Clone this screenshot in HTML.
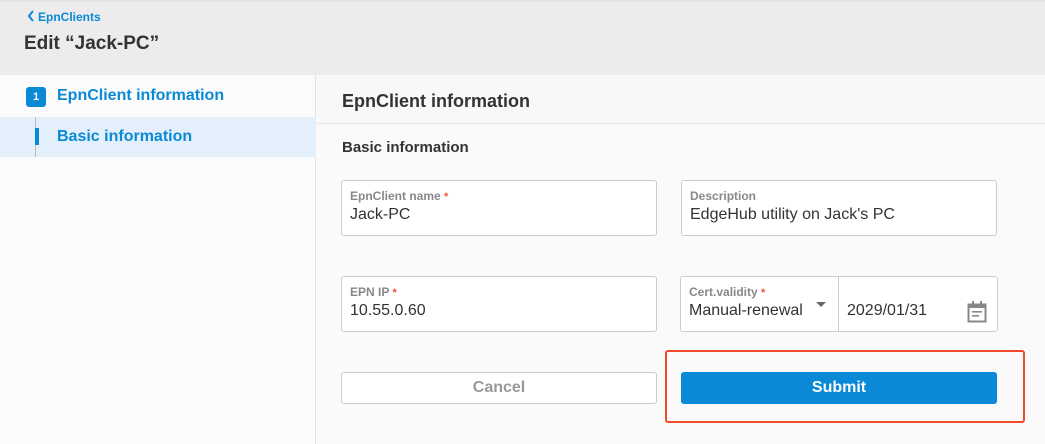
<!DOCTYPE html>
<html><head><style>
*{box-sizing:border-box;margin:0;padding:0}
body{width:1045px;height:444px;overflow:hidden;font-family:"Liberation Sans",sans-serif;background:#fafafa;position:relative}
.top{position:absolute;left:0;top:0;width:1045px;height:75px;background:#ececec;border-top:2px solid #e2e2e2}
.back{position:absolute;left:27px;top:10px;color:#0a8ad6;font-size:12px;font-weight:bold}
.title{position:absolute;left:24px;top:33px;font-size:19px;font-weight:bold;color:#333}
.side{position:absolute;left:0;top:75px;width:316px;height:369px;background:#fbfbfb;border-right:1px solid #e4e4e4}
.num{position:absolute;left:26px;top:87px;width:20px;height:20px;background:#0a8ad6;border-radius:3px;color:#fff;font-size:11px;font-weight:bold;text-align:center;line-height:20px}
.s1{position:absolute;left:57px;top:87px;color:#0a8ad6;font-size:16px;font-weight:bold}
.sel{position:absolute;left:0;top:117px;width:316px;height:40px;background:#e3f0fb}
.vl{position:absolute;left:35px;top:117px;width:1px;height:40px;background:#bbb}
.vb{position:absolute;left:35px;top:128px;width:4px;height:17px;background:#0a8ad6}
.s2{position:absolute;left:57px;top:128px;color:#0a8ad6;font-size:16px;font-weight:bold}
.ph{position:absolute;left:317px;top:75px;width:728px;height:49px;border-bottom:1px solid #e2e2e2;background:#f8f8f8}
.ph span{position:absolute;left:25px;top:16px;font-size:18px;font-weight:bold;color:#333}
.sub{position:absolute;left:342px;top:139px;font-size:15px;font-weight:bold;color:#333}
.in{position:absolute;background:#fff;border:1px solid #ccc;border-radius:3px;height:56px}
.in .l{position:absolute;left:8px;top:8px;font-size:12px;font-weight:bold;color:#888}
.in .l b{color:#e8553a;font-size:11px}
.in .v{position:absolute;left:8px;top:25px;font-size:16px;color:#333}
.btn{position:absolute;height:32px;border-radius:3px;font-size:16px;font-weight:bold;text-align:center;line-height:30px}
</style></head><body>
<div class="top"></div>
<div class="back"><svg width="8" height="12" style="vertical-align:-1px;margin-right:3px"><path d="M6 1L2 6l4 5" stroke="#0a8ad6" stroke-width="2" fill="none"/></svg>EpnClients</div>
<div class="title">Edit “Jack-PC”</div>
<div class="side"></div>
<div class="num">1</div><div class="s1">EpnClient information</div>
<div class="sel"></div><div class="vl"></div><div class="vb"></div><div class="s2">Basic information</div>
<div class="ph"><span>EpnClient information</span></div>
<div class="sub">Basic information</div>
<div class="in" style="left:341px;top:180px;width:316px"><div class="l">EpnClient name <b>*</b></div><div class="v">Jack-PC</div></div>
<div class="in" style="left:681px;top:180px;width:316px"><div class="l">Description</div><div class="v">EdgeHub utility on Jack's PC</div></div>
<div class="in" style="left:341px;top:276px;width:316px"><div class="l">EPN IP <b>*</b></div><div class="v">10.55.0.60</div></div>
<div class="in" style="left:680px;top:276px;width:318px">
<div class="l">Cert.validity <b>*</b></div><div class="v">Manual-renewal</div>
<div style="position:absolute;left:135px;top:25px;width:0;height:0;border-left:5px solid transparent;border-right:5px solid transparent;border-top:5px solid #666"></div>
<div style="position:absolute;left:157px;top:0;width:1px;height:54px;background:#ccc"></div>
<div style="position:absolute;left:166px;top:25px;font-size:16px;color:#333">2029/01/31</div>
<svg style="position:absolute;left:286px;top:24px" width="20" height="22" viewBox="0 0 20 22"><rect x="1.5" y="3.5" width="17" height="17" fill="none" stroke="#888" stroke-width="2"/><rect x="1" y="3" width="18" height="4" fill="#888"/><rect x="5" y="0" width="2" height="4" fill="#888"/><rect x="13" y="0" width="2" height="4" fill="#888"/><rect x="5" y="10" width="10" height="1.6" fill="#888"/><rect x="5" y="14" width="7" height="1.6" fill="#888"/></svg>
</div>
<div class="btn" style="left:341px;top:372px;width:316px;background:#fff;border:1px solid #ccc;color:#999">Cancel</div>
<div style="position:absolute;left:665px;top:350px;width:360px;height:73px;border:2px solid #f04a2a;border-radius:3px"></div>
<div class="btn" style="left:681px;top:372px;width:316px;background:#0a8ad6;color:#fff;line-height:32px">Submit</div>
</body></html>
